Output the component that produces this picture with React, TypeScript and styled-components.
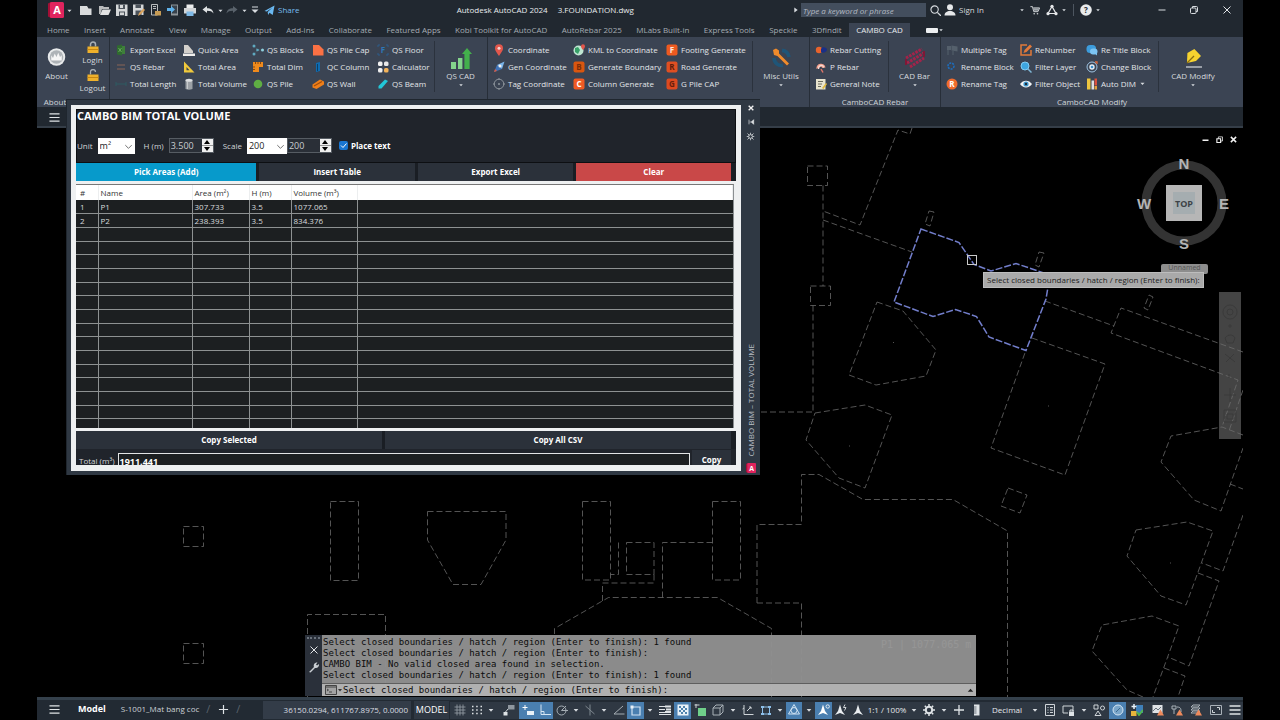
import React from "react";
import styled, { createGlobalStyle } from "styled-components";

const UI = `"Open Sans", "Noto Sans", "Liberation Sans", sans-serif`;
const MONO = `"DejaVu Sans Mono", "Liberation Mono", monospace`;

const GlobalStyle = createGlobalStyle`
  *, *::before, *::after { box-sizing: border-box; }
  body { margin: 0; background: #000; color: #d6dade; font-family: ${UI}; font-size: 8px; line-height: 12px; }
  button, input, select { font: inherit; color: inherit; margin: 0; padding: 0; border: 0; background: none; border-radius: 0; }
  button { cursor: pointer; white-space: nowrap; }
  a { color: inherit; text-decoration: none; }
  svg { display: block; flex: none; }
`;

/* ---------- icons, all on a 12 x 12 grid ---------- */

const letterTile = (bg: string, fg: string, letter: string) => (
  <>
    <rect x="0.5" y="0.5" width="11" height="11" rx="2" fill={bg} />
    <text x="6" y="9" fontSize="8" fontWeight="700" textAnchor="middle" fill={fg}>{letter}</text>
  </>
);

const icons: Record<string, React.ReactNode> = {
  caret: <path d="M2.5 4.5h7L6 8.5z" fill="#d8dce0" />,
  newDoc: <path d="M0 2h7l1.500 2.500H11.500V11H0z" fill="#d9dbdc" />,
  folder: <><path d="M0 2h4l1 1h5v2H3L1.500 10H0z" fill="#b9bbbc" /><path d="M3.500 5.500H12L9.500 11H1z" fill="#e2e3e3" /></>,
  save: <><path d="M0 0.500h11.500V12H0z" fill="#d5d7d8" /><path d="M2.500 0.500h6.500V5H2.500zM3 7.500h6V12H3z" fill="#4b525a" /><path d="M4 1h3v3H4zM4 8.500h4V11H4z" fill="#d5d7d8" /></>,
  saveAs: <><path d="M0 0.500h10.500V11H0z" fill="#d5d7d8" /><path d="M2.500 0.500h5.500V4H2.500zM2.500 6.500h6V11h-6z" fill="#4b525a" /><path d="M5 12l1-3 4.500-4.500L12 6l-4.500 4.500z" fill="#d9a25c" /></>,
  openWeb: <><path d="M1.500 0.500h6V11h-6z" fill="none" stroke="#b9bcbe" /><path d="M5 7h6v4.500H5z" fill="#c79c55" /><path d="M3 2.500h3M3 4.500h3" stroke="#b9bcbe" /></>,
  saveWeb: <><path d="M4 0.500h7V11.500H4z" fill="#8e9498" /><path d="M5 1.500h5v8H5z" fill="#38424c" /><path d="M0 4h4V2l4 3.500L4 9V7H0z" fill="#5fb2ea" /></>,
  print: <><path d="M2.500 0.500h7V4h-7z" fill="#eceded" /><path d="M0 4h12v5.500H0z" fill="#d2d5d7" /><path d="M2.500 7.500h7V12h-7z" fill="#7fb9e6" /></>,
  undo: <path d="M0.500 5.500L5 2v2.300c4 0 6 1.700 6.500 5.200C10 7.500 8.500 6.800 5 6.800V9z" fill="#dfe2e4" />,
  redo: <path d="M11.500 5.500L7 2v2.300c-4 0-6 1.700-6.500 5.200C2 7.500 3.500 6.800 7 6.800V9z" fill="#59626b" />,
  custom: <><path d="M3 3h6" stroke="#d8dce0" /><path d="M2.500 5.500h7L6 9z" fill="#d8dce0" /></>,
  plane: <path d="M0.500 6.500L11.500 0.500L9.500 11L6 8.500L4.500 11L4 7.500L9 3L3 7z" fill="#6bb9f2" />,
  search: <><circle cx="5" cy="5" r="4" fill="none" stroke="#d8dce0" strokeWidth="1.200" /><path d="M8 8l4 4" stroke="#d8dce0" strokeWidth="1.400" /></>,
  user: <><circle cx="6" cy="3.300" r="3" fill="#e6e8ea" /><path d="M0.500 11.500c0-3 2.500-4.500 5.500-4.500s5.500 1.500 5.500 4.500z" fill="#e6e8ea" /></>,
  cart: <><path d="M0.500 2H3l1.500 6h5L11.500 3.500H4" fill="none" stroke="#cfd3d6" strokeWidth="1.200" /><path d="M4 4h7l-1.500 3h-5z" fill="#9fa5aa" /><circle cx="5" cy="10.500" r="1" fill="#cfd3d6" /><circle cx="9" cy="10.500" r="1" fill="#cfd3d6" /></>,
  apps: <><path d="M6 2.500L2 9.500h8z" fill="none" stroke="#e6e8ea" strokeWidth="1.200" /><circle cx="6" cy="2.300" r="1.600" fill="#e6e8ea" /><circle cx="2" cy="9.700" r="1.600" fill="#e6e8ea" /><circle cx="10" cy="9.700" r="1.600" fill="#e6e8ea" /></>,
  help: <><circle cx="6" cy="6" r="5.800" fill="#e9ebec" /><text x="6" y="9" fontSize="8" fontWeight="700" textAnchor="middle" fill="#222a32">?</text></>,
  min: <path d="M2.500 6h7" stroke="#d8dce0" />,
  restore: <><rect x="2.500" y="4" width="5.500" height="5.500" rx="1" fill="none" stroke="#d8dce0" /><path d="M4.500 4V2.500H8.500a1 1 0 0 1 1 1V7.500H8" fill="none" stroke="#d8dce0" /></>,
  close: <path d="M2.500 2.500l7 7M9.500 2.500l-7 7" stroke="#e2e5e8" />,
  docMin: <path d="M2 7h8" stroke="#f2f2f2" strokeWidth="2" />,
  docRestore: <><path d="M2.500 5h5v5h-5z" fill="none" stroke="#f2f2f2" strokeWidth="1.500" /><path d="M4.500 5V2.500H10V8H8" fill="none" stroke="#f2f2f2" /></>,
  docClose: <path d="M2.500 2.500l7 7M9.500 2.500l-7 7" stroke="#f2f2f2" strokeWidth="2" />,
  playCaret: <path d="M4 3l4 3-4 3z" fill="#d8dce0" />,
  excel: <><path d="M2 1.500l5-1v11l-5-1z" fill="#2f6b2f" /><path d="M7 2h3v8H7z" fill="#3e7f3a" /><path d="M3.500 4l3 4M6.500 4l-3 4" stroke="#68a85a" /></>,
  qsRebar: <path d="M2 4h8M2 8h8" stroke="#8a6556" strokeWidth="1.200" />,
  length: <path d="M1 6h10M1 4v4M11 4v4" stroke="#2f5a62" />,
  quickArea: <><path d="M1 1l4 0 5 6v2H1z" fill="#d3d0cc" /><path d="M0 9.500h12V12H0z" fill="#f0eeec" /></>,
  totalArea: <><path d="M1 0.500L11.500 11.500H1z" fill="#f0c93c" /><path d="M3.500 6L6.500 9.300H3.500z" fill="#3b4452" /></>,
  volume: <><path d="M2.500 2h7v9q-3.500 1.500-7 0z" fill="#9ca1a6" /><ellipse cx="6" cy="2.200" rx="3.500" ry="1.500" fill="#dddfe1" /><path d="M4.500 4v7" stroke="#c6cacd" /></>,
  blocks: <><path d="M2 2L6 6L2 10M6 6h4" stroke="#4a6672" fill="none" strokeDasharray="1.500 1" /><circle cx="2" cy="2" r="1.500" fill="#5fa9c0" /><circle cx="2" cy="10" r="1.500" fill="#5fa9c0" /><circle cx="5.500" cy="6" r="1.300" fill="#5fa9c0" /><circle cx="10.500" cy="6" r="1.500" fill="#8fd0dd" /></>,
  totalDim: <><path d="M1 1h10v5H7v5H1z" fill="#ef8a1c" /><path d="M3.500 1v2M6 1v2M8.500 1v2M1 6h2M1 8.500h2" stroke="#8c4a0c" /></>,
  qsPile: <circle cx="6" cy="6" r="4.300" fill="#5fae43" />,
  pileCap: <path d="M1 1h6l4.500 4.500V11.500H1z" fill="#fb7144" />,
  column: <><path d="M4 2l4-1v9l-4 1z" fill="#0f6bb0" /><path d="M5.500 3v7" stroke="#0a3f66" /></>,
  wall: <><path d="M0.500 6.500L8 1.500L12 3.500V6.500L4.500 11L0.500 9.500z" fill="#ee7f1a" /><path d="M2 8l8-4.500" stroke="#a44e08" strokeWidth="1.300" /></>,
  floor: <><path d="M1 3V1h2M9 1h2v2M11 9v2H9M3 11H1V9" fill="none" stroke="#2c5c8c" /><text x="6" y="9" fontSize="8" fontWeight="700" textAnchor="middle" fill="#2e78b8">F</text></>,
  calc: <><rect x="1" y="0.500" width="4.500" height="4.500" rx="1.500" fill="#f1f1f1" /><rect x="7" y="0.500" width="4.500" height="4.500" rx="1.500" fill="#e8e8e8" /><rect x="1" y="7" width="4.500" height="4.500" rx="1.500" fill="#eeeeee" /><rect x="7" y="7" width="4.500" height="4.500" rx="1.500" fill="#f3b35a" /></>,
  beam: <path d="M1.500 8L8 1.500L11 3L4.500 10.500L1.500 10.500z" fill="#22c7d8" />,
  pin: <><path d="M6 12C3.500 8 2 6.500 2 4.200a4 4 0 0 1 8 0C10 6.500 8.500 8 6 12z" fill="#e2574c" /><circle cx="6" cy="4.300" r="1.500" fill="#f6d5d2" /></>,
  gen: <><path d="M1 11L4 4L9 8z" fill="#3f73b8" /><path d="M4 4L11.500 0.500L9 8z" fill="#79b4ea" /><circle cx="7" cy="5" r="1.500" fill="#f2f2f2" /><path d="M1 11l3-1-2-2z" fill="#e05a3f" /></>,
  tag: <><circle cx="6" cy="6" r="4.800" fill="none" stroke="#8d949b" /><circle cx="6" cy="6" r="1" fill="#8d949b" /><path d="M6 0v2M6 10v2M0 6h2M10 6h2" stroke="#8d949b" /></>,
  kml: <><circle cx="5.500" cy="6.500" r="5" fill="#bfe6d2" /><path d="M2 4l3-1 2 3-2 4-3-2z" fill="#38a169" /><path d="M10 6C8.500 4 8 3.300 8 2.200a2 2 0 0 1 4 0C12 3.300 11.500 4 10 6z" fill="#e2574c" /></>,
  tileB: letterTile("#d9560f", "#7c2d06", "B"),
  tileC: letterTile("#ef5a24", "#ffffff", "C"),
  tileF: letterTile("#ee5a20", "#ffe9dc", "F"),
  tileR: letterTile("#df4f22", "#5f1d0a", "R"),
  tileG: letterTile("#dd4a20", "#6a1f0b", "G"),
  cutting: <><circle cx="4" cy="6" r="3.200" fill="#e8632c" /><path d="M6 5c1-3 6-2 6 0.500S8 10 6 8z" fill="#1b2f86" /></>,
  pRebar: <><path d="M1.500 8a4.500 4.500 0 1 1 9-1.500L7.500 7 6 5.500z" fill="#f4a08e" /><path d="M3.500 8c0-4.500 5-4.500 5-1.500" fill="none" stroke="#f6dcd5" strokeWidth="1.200" /><path d="M6 8l2 3.500" stroke="#e0776a" strokeWidth="1.500" /></>,
  note: <><path d="M1 1h9.500v10.500H1z" fill="#e8e4cf" /><path d="M3 3.500h5M3 6h4M3 8.500h3" stroke="#6b6b5e" /><path d="M7 10l4-5 1 1-3.500 5z" fill="#e2b93c" /></>,
  multiTag: <><path d="M1 2h4v4H1zM5.500 1.500l6 1v5l-6-1z" fill="#55606c" /><path d="M2 6v5M7 7v4" stroke="#55606c" /></>,
  renameBlock: <circle cx="5" cy="5" r="3" fill="none" stroke="#1d6fc0" strokeWidth="1.500" strokeDasharray="2 1" />,
  renameTag: <><circle cx="6" cy="6" r="5.500" fill="#f06b2c" /><text x="6" y="9" fontSize="8" fontWeight="700" textAnchor="middle" fill="#fff">R</text></>,
  renumber: <><path d="M7 1H1v10h10V6" fill="none" stroke="#e2793a" strokeWidth="1.500" /><path d="M3.500 9l1-3L10 0.500 12 2.500 6.500 8z" fill="#e2793a" /></>,
  filterLayer: <><circle cx="5" cy="5" r="4" fill="#3ea6e0" stroke="#85cdf2" /><path d="M8 8l3.500 3.500" stroke="#7fb6d6" strokeWidth="1.500" /></>,
  eye: <><path d="M0 6C3 1.500 9 1.500 12 6C9 10.500 3 10.500 0 6z" fill="#f2f4f5" /><circle cx="6" cy="6" r="2.600" fill="#3f9ad0" /><circle cx="6" cy="6" r="1.200" fill="#1c2b38" /></>,
  retitle: <><rect x="0.500" y="1" width="9.500" height="8" rx="3.500" fill="#3d9ddd" /><rect x="4" y="4.500" width="7.500" height="6" rx="3" fill="#7cc4f3" /><path d="M8 9l3 2.500V9z" fill="#7cc4f3" /></>,
  change: <><circle cx="6" cy="6" r="5" fill="none" stroke="#9fc4e4" /><circle cx="6" cy="6" r="2.700" fill="#e4eef6" /><circle cx="6" cy="6" r="1.300" fill="#3c8dcb" /><path d="M9 1h2v2" fill="none" stroke="#e0683a" strokeWidth="1.300" /></>,
  autoDim: <><path d="M1 0.500h3.500v11H1z" fill="#edc53f" /><path d="M5.500 2.500h2.500v9H5.500z" fill="#dfe1e2" /><path d="M8.500 0.500H11v7H8.500z" fill="#d9503e" /><path d="M8.500 8H11v3.500H8.500z" fill="#e5a13c" /></>,
  burger: <path d="M0.500 2h11M0.500 6h11M0.500 10h11" stroke="#dfe3e6" strokeWidth="1.300" />,
  plus: <path d="M6 1v10M1 6h10" stroke="#dfe3e6" strokeWidth="1.300" />,
  grid: <path d="M3 0.500v11M6 0.500v11M9 0.500v11M0.500 3h11M0.500 6h11M0.500 9h11" stroke="#9aa2aa" strokeWidth="0.800" />,
  dots: <path d="M1 2.500h1.500M5.200 2.500h1.500M9.500 2.500H11M1 6h1.500M5.200 6h1.500M9.500 6H11M1 9.500h1.500M5.200 9.500h1.500M9.500 9.500H11" stroke="#dfe3e6" strokeWidth="1.500" />,
  infer: <><path d="M5 1h6.500v4.500H5z" fill="#8f979f" /><path d="M5 5L2.500 8" stroke="#cfd4d8" /><path d="M0.500 8h4v3.500h-4z" fill="#dfe3e6" /></>,
  dyn: <><path d="M3 1v5M0.500 3.500h5" stroke="#fff" /><path d="M5 7h7v4H5z" fill="#e8f1f8" /></>,
  ortho: <><path d="M2 0.500V10.500H12" fill="none" stroke="#d5e6f4" /><path d="M2 7.500h3v3" fill="none" stroke="#d5e6f4" /></>,
  polar: <><circle cx="5.500" cy="6.500" r="4.500" fill="none" stroke="#a5adb4" /><path d="M5.500 6.500h6.500M5.500 6.500L10 2" stroke="#a5adb4" /></>,
  iso: <path d="M6 0.500v11M1.500 2l9 8" stroke="#7f8890" />,
  otrack: <path d="M1 10h10.500M1 10L10 2" stroke="#a5adb4" fill="none" />,
  osnap: <><path d="M2 3h8v8H2z" fill="none" stroke="#cfe2f2" strokeWidth="1.200" /><path d="M0.500 1.500h3v3h-3z" fill="#e8f1f8" /></>,
  lwt: <><path d="M0 2.500h6M0 5.500h6M0 8.500h6M0 10.500h12" stroke="#dfe3e6" /><path d="M6 2.500h6M7 5.500h5M6 8h6" stroke="#dfe3e6" strokeWidth="1.800" /></>,
  transp: <><path d="M0.500 0.500h11v11h-11z" fill="#e9f2f9" /><path d="M2 2h2v2H2zM6 2h2v2H6zM4 4h2v2H4zM8 4h2v2H8zM2 6h2v2H2zM6 6h2v2H6zM4 8h2v2H4zM8 8h2v2H8z" fill="#4f83ad" /></>,
  cycle: <><path d="M4 4h8v8H4z" fill="#6fcf8a" /><path d="M0.500 1h5M2 0v4" stroke="#cfd4d8" /></>,
  cube: <path d="M1 4h7v7H1zM4 1h7v7M1 4l3-3M8 4l3-3M8 11l3-3" fill="none" stroke="#a9b1b8" />,
  ucs: <path d="M2 1v9.500H11.500M2 4L0.500 5M5 7l4-4M7 3h2v2" fill="none" stroke="#cfd4d8" />,
  sel: <><path d="M2.500 3h7v7h-7z" fill="none" stroke="#8ec0ea" /><path d="M1 2h3v2H1zM8 2h3v2H8zM1 9h3v2H1zM8 9h3v2H8z" fill="#8ec0ea" /></>,
  gizmo: <><path d="M6 0.500L11.500 10H0.500z" fill="none" stroke="#cfe2f2" /><circle cx="6" cy="6.500" r="3" fill="none" stroke="#cfe2f2" /></>,
  anno: <path d="M6 0.500L8 7l3 4-5-2-5 2 3-4z" fill="#e9edf0" />,
  annoAuto: <><path d="M5 0.500L7 7l3 4-5-2-5 2 3-4z" fill="#e9edf0" /><path d="M10 0.500l-1.500 3h2.500l-1.500 3" stroke="#cfd4d8" fill="none" /></>,
  annoVis: <><path d="M5 0.500L7 7l3 4-5-2-5 2 3-4z" fill="#fff" /><circle cx="9.700" cy="2.500" r="1.700" fill="none" stroke="#fff" strokeWidth="0.800" /></>,
  gear: <><circle cx="6" cy="6" r="3.200" fill="none" stroke="#dfe3e6" strokeWidth="2" /><path d="M6 0v2M6 10v2M0 6h2M10 6h2M1.800 1.800l1.400 1.400M8.800 8.800l1.400 1.400M10.200 1.800L8.800 3.200M3.200 8.800l-1.400 1.400" stroke="#dfe3e6" strokeWidth="1.500" /></>,
  ruler: <><path d="M3 0.500h5.500v11H3z" fill="#dfe3e6" /><path d="M3 3h2.500M3 5h2.500M3 7h2.500M3 9h2.500" stroke="#4b5560" strokeWidth="0.800" /></>,
  props: <><path d="M1.500 0.500h9v11h-9z" fill="none" stroke="#cfd4d8" /><path d="M3.500 3.500h1M6 3.500h3M3.500 6h1M6 6h3M3.500 8.500h1M6 8.500h3" stroke="#cfd4d8" /></>,
  lockUi: <><path d="M1 2h10v5M1 2v7h5" fill="none" stroke="#cfd4d8" /><path d="M7 7.500h5V12H7z" fill="#dfe3e6" /><path d="M8 7.500V6h3v1.500" fill="none" stroke="#dfe3e6" /></>,
  shapes: <><path d="M1 1h4v4H1z" fill="none" stroke="#cfd4d8" /><circle cx="9.500" cy="4" r="2" fill="none" stroke="#cfd4d8" /><path d="M5 7l3 4.500H2z" fill="none" stroke="#cfd4d8" /></>,
  isolate: <><circle cx="6" cy="6" r="5" fill="#7aa6ca" stroke="#d5e6f4" /><path d="M4 8l4-4" stroke="#3c6a90" /></>,
  cloud: <><path d="M5 1h7v8H5z" fill="#3f7fb8" /><path d="M3 0v5M0.500 2.500h5" stroke="#e9f2f9" strokeWidth="1.500" /><path d="M0 7h5.500v5H0z" fill="#e8b53c" /><path d="M6 8l2 3 4-5" fill="none" stroke="#51b84f" strokeWidth="1.800" /></>,
  warnImg: <><path d="M0.500 1h10v8h-10z" fill="#dfe3e6" /><path d="M1 7l3-3 2 2 3-3" stroke="#69737d" fill="none" /><path d="M8.500 5.500l3.500 6H5z" fill="#ee8a5c" /></>,
  warnRef: <><path d="M1 2h4v3H1zM3 5v5M6 3c4 0 4 2 4 5" fill="none" stroke="#a9b1b8" /><path d="M8.500 5.500l3.500 6H5z" fill="#ee8a5c" /></>,
  warnLayer: <><path d="M3 1h7l-2 2H1zM3 4h7l-2 2H1zM3 7h7l-2 2H1z" fill="none" stroke="#a9b1b8" /><path d="M8.500 5.500l3.500 6H5z" fill="#ee8a5c" /></>,
  screen: <><path d="M0.500 1.500h11v9H0.500z" fill="none" stroke="#a9b1b8" /><path d="M7 3.500h2.500V6M5 8.500H2.500V6" fill="none" stroke="#cfd4d8" /></>,
  wrench: <path d="M1 11L6 6C5 3.500 7 1 9.500 1.500L8 3.500 9 4.500 11 3C11.500 5.500 9 7.500 7 7L2.500 11.500z" fill="#c9ced3" />,
  autohide: <path d="M3 2.500v7M10 2.500v7L6.500 6zM4 6h3" stroke="#e2e5e8" fill="#e2e5e8" />,
  sun: <><circle cx="6" cy="6" r="2.500" fill="none" stroke="#e2e5e8" strokeWidth="1.200" /><path d="M2 2l2 2M10 2L8 4M2 10l2-2M10 10L8 8M6 1v2M6 9v2M1 6h2M9 6h2" stroke="#e2e5e8" /></>,
  prompt: <><path d="M0.500 1.500h11v9H0.500z" fill="#a3a3a3" stroke="#444" /><path d="M0.500 3h11" stroke="#444" /><path d="M2 5l1.500 1L2 7M4 8h3" stroke="#444" fill="none" /></>,
  darkCaret: <path d="M2 4h8L6 9z" fill="#333" />,
  chevron: <path d="M2.500 4.500L6 8l3.500-3.500" fill="none" stroke="#666" />,
  /* large ribbon artwork */
  aboutBig: <><circle cx="6" cy="6" r="5" fill="#e8eaeb" /><circle cx="6" cy="6" r="3.900" fill="#aeb3b7" /><path d="M3 8V5l1 1.500L5 4l1 2 1-2.500L8 6l1-1v3z" fill="#f6f6f6" /></>,
  lock: <><path d="M3.500 5.500V3.500a2.500 2.500 0 0 1 5 0V5.500" fill="none" stroke="#a9afb5" strokeWidth="1.500" /><path d="M0.500 5.500h11V12h-11z" fill="#efb12b" /><path d="M0.500 8.500h11" stroke="#c88711" /></>,
  unlock: <><path d="M3.500 5.500V3a2.500 2.500 0 0 1 5 0" fill="none" stroke="#a9afb5" strokeWidth="1.300" /><path d="M0.500 5.500h11V12h-11z" fill="#efb12b" /><path d="M0.500 8.500h11" stroke="#c88711" /></>,
  qsCad: <><path d="M1 8.500h2.500V12H1zM4.500 6.500h2.200V12H4.500z" fill="#84d58c" /><path d="M7.700 12V4.500H6.500L9 1.500 11.500 4.500H10.300V12z" fill="#43b04c" /></>,
  misc: <><path d="M2.500 6.500a3.800 3.800 0 0 0 4.500 3.700M10 6a4 4 0 0 0-3.500-3.300" fill="none" stroke="#1f5578" strokeWidth="1.800" /><path d="M2 2.500L3.500 1.800l1.500 1 0 1.400 5 5-1 1L4.200 5.500 2.500 5z" fill="#f08b2c" /></>,
  cadBar: <><path d="M1.500 6.500L9.500 2M2 9L10.500 4M3.500 11L10.500 6.500" stroke="#a3234a" strokeWidth="1.500" strokeDasharray="1.300 0.500" /><path d="M1.500 7v3M10.500 3v3" stroke="#7e1836" /></>,
  cadModify: <><path d="M3 9L3.200 4l3.500-2 3.300 3.500-2.500 2.500z" fill="#f6d32f" /><path d="M3 9L6.500 5.500" stroke="#8a6d10" strokeWidth="0.600" /><path d="M2.500 11h8" stroke="#d9dcdf" strokeWidth="0.600" /></>,
};

const Glyph = ({ name, size = 12 }: { name: string; size?: number }) => (
  <svg width={size} height={size} viewBox="0 0 12 12" aria-hidden="true">{icons[name]}</svg>
);

const AcadLogo = ({ size = 16 }: { size?: number }) => (
  <svg width={size} height={size} viewBox="0 0 16 16" aria-hidden="true">
    <path d="M0 1.500L3 0v16L0 14.500z" fill="#a30f36" />
    <rect x="2" width="14" height="16" rx="1.500" fill="#e0245e" />
    <text x="9" y="12" fontSize="11" fontWeight="700" textAnchor="middle" fill="#fff">A</text>
  </svg>
);

/* ---------- application frame ---------- */

const Frame = styled.div`
  display: flex; flex-direction: column; min-height: 100vh;
  margin: 0 37px; position: relative; overflow: hidden; background: #212830;
`;
const TitleBar = styled.header`
  display: flex; align-items: center; justify-content: space-between; height: 20px; padding: 0 10px 0 11px;
`;
const Group = styled.div`
  display: flex; align-items: center;
`;
const WindowButtons = styled.div`
  display: flex; align-items: center; gap: 20px; padding-left: 52px;
`;
const Slot = styled.button<{ $w: number }>`
  display: flex; align-items: center; justify-content: center; width: ${(p) => p.$w}px; height: 14px; flex: none;
`;
const ShareButton = styled.button`
  display: flex; align-items: center; gap: 3px; color: #78bdf0; padding-left: 2px;
`;
const Caption = styled.div`
  display: flex; gap: 10px; color: #e8ebee; white-space: pre;
`;
const KeywordBox = styled.input`
  width: 125px; height: 14px; padding: 0 2px; background: #434e5d; font-style: italic;
  &::placeholder { color: #b3bac2; opacity: 1; }
`;
const SignIn = styled.button`
  display: flex; align-items: center; gap: 3px; width: 74px;
`;
const Rule = styled.span`
  width: 1px; height: 12px; background: #4d5660; margin: 0 5px;
`;
const TabStrip = styled.nav`
  display: flex; align-items: flex-end; height: 17px; padding-left: 3px; white-space: nowrap;
`;
const TabList = styled.div`
  display: flex; justify-content: space-between; width: 870px;
`;
const RibbonTab = styled.a<{ $active?: boolean }>`
  padding: 0 7px; height: 14px; line-height: 14px;
  color: ${(p) => (p.$active ? "#e8ebee" : "#a5acb3")};
  background: ${(p) => (p.$active ? "#3b4453" : "transparent")};
`;
const RibbonState = styled.button`
  display: flex; align-items: center; height: 14px; margin-left: 16px;
  &::before { content: ""; width: 12px; height: 5px; background: #eef0f2; border-radius: 1px; }
`;

const Ribbon = styled.section`
  display: flex; height: 70px; background: #3b4453;
`;
const Panel = styled.div<{ $w?: number }>`
  display: flex; flex-direction: column; border-right: 1px solid #272e38;
  ${(p) => (p.$w ? `width: ${p.$w}px; flex: none;` : "flex: 1; border-right: 0;")}
`;
const PanelBody = styled.div`
  display: flex; height: 57px; padding-top: 4px;
`;
const PanelTitle = styled.div`
  display: flex; justify-content: space-around; text-align: center; line-height: 15px; color: #d0d4d9;
`;
const ToolGrid = styled.div<{ $cols: string }>`
  display: grid; grid-template-columns: ${(p) => p.$cols}; grid-template-rows: repeat(3, 17px);
  grid-auto-flow: column; padding-left: 5px; border-right: 1px solid #2b323d; margin-bottom: 2px;
`;
const Tool = styled.button`
  display: flex; align-items: center; gap: 3px; color: #e2e5e8; text-align: left;
`;
const BigTool = styled.button<{ $w: number }>`
  display: flex; flex-direction: column; align-items: center; width: ${(p) => p.$w}px; padding-top: 3px;
  svg:first-child { height: 26px; }
`;
const SmallStack = styled.div`
  display: flex; flex-direction: column; gap: 3px; width: 33px;
`;
const StackTool = styled.button`
  display: flex; flex-direction: column; align-items: center; line-height: 13px;
`;
const DocBar = styled.div`
  display: flex; align-items: center; height: 21px; padding: 2px 0 0 11px; border-bottom: 2px solid #353e48;
`;

/* ---------- drawing area ---------- */

const Canvas = styled.main`
  position: relative; flex: 1; min-height: 568px; background: #000; overflow: hidden;
`;
const Drawing = styled.svg`
  position: absolute; inset: 0; width: 100%; height: 100%;
`;
const DocControls = styled.div`
  position: absolute; top: 4px; right: 4px; display: flex; gap: 2px;
`;
const ViewCube = styled.svg`
  position: absolute; top: 26px; right: 8px;
`;
const UcsMenu = styled.button`
  position: absolute; top: 136px; right: 35px; width: 47px; height: 10px; border-radius: 2px; background: #8d8d8d; color: #555;
  font-size: 7px; line-height: 8px; padding-bottom: 2px;
`;
const NavBar = styled.div`
  position: absolute; top: 164px; right: 2px; width: 22px; height: 147px; padding: 10px 0;
  display: flex; flex-direction: column; align-items: center; justify-content: space-between; background: rgba(110, 110, 110, 0.62);
`;
const Prompt = styled.div`
  position: absolute; top: 144px; left: 946px; height: 16px; padding: 0 3px; line-height: 14px; white-space: nowrap;
  background: #a9a9a9; border: 1px solid #bdbdbd; color: #1d1d1d;
`;

/* ---------- command line ---------- */

const CommandWindow = styled.section`
  position: absolute; left: 268px; bottom: 1px; display: flex; width: 671px; height: 61px; font-family: ${MONO}; font-size: 9px; color: #0c0c0c;
`;
const CommandGrip = styled.div`
  display: flex; flex-direction: column; align-items: center; gap: 5px; width: 17px; padding-top: 2px; background: #2a303a;
  &::before { content: ""; width: 13px; border-top: 2px dotted #6a727c; }
`;
const CommandBody = styled.div`
  flex: 1; display: flex; flex-direction: column;
`;
const History = styled.div`
  flex: 1; padding: 2px 1px; line-height: 11px; white-space: pre; background: rgba(145, 145, 145, 0.96);
`;
const CommandRow = styled.label`
  display: flex; align-items: center; height: 14px; padding: 0 0 0 3px; background: rgba(182, 182, 182, 0.97); border-top: 1px solid #5e5e5e;
  input { flex: 1; }
`;

/* ---------- total volume palette ---------- */

const Palette = styled.section`
  position: absolute; left: 29px; top: 99px; display: flex; width: 694px; height: 376px; padding: 0 0 0 4px;
  background: #2f3843; border: 1px solid #1f262e; border-width: 1px 0 0 1px;
`;
const PaletteBody = styled.div`
  flex: 1; min-width: 0; display: flex; flex-direction: column; margin: 5px 0 4px; padding: 4px 5px 6px; background: #eef0f1; overflow: hidden;
`;
const PaletteRail = styled.aside`
  display: flex; flex-direction: column; align-items: center; width: 19px; padding: 1px 0 2px;
`;
const RailTitle = styled.span`
  writing-mode: vertical-rl; transform: rotate(180deg); margin: auto 0 6px; color: #b7bdc3; white-space: nowrap;
`;
const SettingsBox = styled.div`
  height: 54px; flex: none; background: #20242b; border: 1px solid #0d0f12; color: #d2d5d8;
`;
const Heading = styled.h1`
  margin: 0; font-size: 11px; line-height: 12px; font-weight: 700; color: #fff;
`;
const Settings = styled.div`
  display: flex; align-items: center; margin-top: 15px; height: 17px;
`;
const Field = styled.label<{ $gap: number }>`
  display: flex; align-items: center; gap: 5px; margin-right: ${(p) => p.$gap}px;
`;
const SelectBox = styled.span<{ $w: number }>`
  position: relative; display: flex; width: ${(p) => p.$w}px; height: 16px; background: #fff; color: #222; font-size: 9px;
  select { width: 100%; padding: 0 2px; appearance: none; }
  svg { position: absolute; right: 1px; top: 3px; pointer-events: none; }
`;
const Spinner = styled.span`
  display: flex; width: 45px; height: 15px; border: 1px solid #565c63; background: #2a2f37; color: #c9cdd1; font-size: 9px;
  input { width: 32px; flex: none; padding: 0 1px; }
  div { flex: 1; display: flex; flex-direction: column; background: #f0f0f0; }
  button { flex: 1; display: flex; align-items: center; justify-content: center; height: 6px; overflow: hidden; }
  button + button { border-top: 1px solid #999; }
`;
const CheckField = styled.label`
  display: flex; align-items: center; gap: 3px; margin-left: 7px; font-weight: 700; color: #fff;
  input { appearance: none; width: 9px; height: 9px; border-radius: 2px; background: #1976d2 url("data:image/svg+xml,%3Csvg xmlns='http://www.w3.org/2000/svg' viewBox='0 0 9 9'%3E%3Cpath d='M2 4.500l2 2 3.500-4' fill='none' stroke='white'/%3E%3C/svg%3E"); }
`;
const ButtonRow = styled.div<{ $cols: string }>`
  display: grid; grid-template-columns: ${(p) => p.$cols}; gap: 3px; flex: none; height: 18px; padding-right: 5px; background: #1a1e24;
`;
const PaletteButton = styled.button<{ $tone?: string }>`
  font-weight: 700; color: #fff; background: ${(p) => p.$tone ?? "#2b313a"};
`;
const TableBox = styled.div`
  height: 244px; flex: none; margin: 3px 2px 3px 0; overflow: hidden; background: #1c1f21; border-right: 1px solid #8b8f92; border-top: 1px solid #777;
`;
const Table = styled.table`
  width: 100%; height: 248px; table-layout: fixed; border-collapse: collapse; color: #d8dbdd;
  th { padding: 0 2px; height: 15px; background: #fff; color: #333; font-weight: 400; text-align: left; line-height: 12px; border-right: 1px solid #eceeef; }
  td { padding: 0 2px; height: 13px; line-height: 10px; border-bottom: 1px solid #8d9192; border-right: 1px solid #8d9192; }
  td:last-child { border-right: 0; }
  th:first-child, td:first-child { padding-left: 4px; }
`;
const TotalRow = styled.div`
  display: flex; flex: 1; min-height: 0; padding: 1px 5px 0 3px; background: #20242b; overflow: hidden;
`;
const TotalField = styled.label`
  display: flex; flex: 1; gap: 3px; height: 18px; line-height: 22px; color: #d2d5d8;
  input { flex: 1; height: 18px; margin-top: 3px; padding-left: 1px; background: #1c1f21; border: 1px solid #e2e4e5; font-size: 9px; font-weight: 700; color: #fff; }
`;
const CopyButton = styled(PaletteButton)`
  width: 39px; height: 20px; margin-left: 2px;
`;

/* ---------- status bar ---------- */

const StatusBar = styled.footer`
  display: flex; align-items: center; height: 23px; border-top: 3px solid #34404b; background: #222a33; white-space: nowrap;
`;
const LayoutTabs = styled.div`
  display: flex; align-items: center; flex: 1; padding: 0 0 2px 11px;
`;
const LayoutTab = styled.a<{ $active?: boolean }>`
  margin-left: ${(p) => (p.$active ? 18 : 15)}px; font-size: ${(p) => (p.$active ? 9 : 8)}px;
  font-weight: ${(p) => (p.$active ? 700 : 400)}; color: ${(p) => (p.$active ? "#fff" : "#ccd1d6")};
`;
const Slash = styled.span`
  margin: 0 7px; font-size: 11px; color: #59636d;
`;
const Coordinates = styled.button`
  width: 148px; height: 18px; padding-right: 3px; text-align: right; background: #333c48; color: #d9dde1;
`;
const ModelButton = styled.button`
  width: 35px; height: 18px; margin: 0 1px 0 3px; background: #2f3843; font-size: 9px; color: #fff;
`;
const StatusItem = styled.button<{ $w: number; $on?: boolean }>`
  display: flex; align-items: center; justify-content: center; flex: none; width: ${(p) => p.$w}px; height: 17px;
  background: ${(p) => (p.$on ? "#4a7fb0" : "#2f3843")}; color: #e6e9ec;
`;

/* ---------- data ---------- */

const tabs = ["Home", "Insert", "Annotate", "View", "Manage", "Output", "Add-ins", "Collaborate", "Featured Apps",
  "Kobi Toolkit for AutoCAD", "AutoRebar 2025", "MLabs Built-in", "Express Tools", "Speckle", "3Dfindit", "CAMBO CAD"];

const qsTools = [["excel", "Export Excel"], ["qsRebar", "QS Rebar"], ["length", "Total Length"],
  ["quickArea", "Quick Area"], ["totalArea", "Total Area"], ["volume", "Total Volume"],
  ["blocks", "QS Blocks"], ["totalDim", "Total Dim"], ["qsPile", "QS Pile"],
  ["pileCap", "QS Pile Cap"], ["column", "QC Column"], ["wall", "QS Wall"],
  ["floor", "QS Floor"], ["calc", "Calculator"], ["beam", "QS Beam"]];
const modelTools = [["pin", "Coordinate"], ["gen", "Gen Coordinate"], ["tag", "Tag Coordinate"],
  ["kml", "KML to Coordinate"], ["tileB", "Generate Boundary"], ["tileC", "Column Generate"],
  ["tileF", "Footing Generate"], ["tileR", "Road Generate"], ["tileG", "G Pile CAP"]];
const rebarTools = [["cutting", "Rebar Cutting"], ["pRebar", "P Rebar"], ["note", "General Note"]];
const modifyTools = [["multiTag", "Multiple Tag"], ["renameBlock", "Rename Block"], ["renameTag", "Rename Tag"],
  ["renumber", "ReNumber"], ["filterLayer", "Filter Layer"], ["eye", "Filter Object"],
  ["retitle", "Re Title Block"], ["change", "Change Block"], ["autoDim", "Auto DIM"]];

const quickAccess: [string, number][] = [["caret", 11], ["newDoc", 21], ["folder", 17], ["save", 17], ["saveAs", 17], ["openWeb", 17],
  ["saveWeb", 17], ["print", 18], ["undo", 17], ["caret", 8], ["redo", 16], ["caret", 8], ["custom", 14]];

const statusItems: { icon?: string; text?: string; w: number; on?: boolean }[] = [
  { icon: "grid", w: 20 }, { icon: "dots", w: 14 }, { icon: "caret", w: 14 }, { icon: "infer", w: 21 },
  { icon: "dyn", w: 17, on: true }, { icon: "ortho", w: 17, on: true }, { icon: "polar", w: 17 }, { icon: "caret", w: 12 },
  { icon: "iso", w: 16 }, { icon: "caret", w: 12 }, { icon: "otrack", w: 17 }, { icon: "osnap", w: 17, on: true },
  { icon: "caret", w: 12 }, { icon: "lwt", w: 18 }, { icon: "transp", w: 17, on: true }, { icon: "cycle", w: 18 },
  { icon: "cube", w: 17 }, { icon: "caret", w: 13 }, { icon: "ucs", w: 18 }, { icon: "sel", w: 17 }, { icon: "caret", w: 12 },
  { icon: "gizmo", w: 16, on: true }, { icon: "caret", w: 13 }, { icon: "annoVis", w: 17, on: true }, { icon: "annoAuto", w: 17 },
  { icon: "anno", w: 17 }, { text: "1:1 / 100%", w: 42 }, { icon: "caret", w: 11 }, { icon: "gear", w: 19 }, { icon: "caret", w: 12 },
  { icon: "plus", w: 18 }, { icon: "ruler", w: 18 }, { text: "Decimal", w: 42 }, { icon: "caret", w: 14 }, { icon: "props", w: 16 },
  { icon: "lockUi", w: 20 }, { icon: "caret", w: 11 }, { icon: "shapes", w: 20 }, { icon: "isolate", w: 17, on: true },
  { icon: "cloud", w: 22 }, { icon: "warnImg", w: 19 }, { icon: "warnRef", w: 19 }, { icon: "warnLayer", w: 20 },
  { icon: "screen", w: 20 }, { icon: "burger", w: 17 },
];

const volumes = [["1", "P1", "307.733", "3.5", "1077.065"], ["2", "P2", "238.393", "3.5", "834.376"]];

const Tools = ({ items, cols }: { items: string[][]; cols: string }) => (
  <ToolGrid $cols={cols}>
    {items.map(([icon, label]) => (
      <Tool key={label}>
        <Glyph name={icon} />{label}{label === "Auto DIM" && <Glyph name="caret" size={7} />}
      </Tool>
    ))}
  </ToolGrid>
);

const Big = ({ icon, label, w }: { icon: string; label: string; w: number }) => (
  <BigTool $w={w}><Glyph name={icon} size={24} /><span>{label}</span><Glyph name="caret" size={6} /></BigTool>
);

const outlines = `
M807.500 166h20v19.500h-20z M823 185.500V286 M810.500 286h20v19.500h-20z M813 305.500V412 M761 412h53
M912 128l-2 6-12-4L860 225L823 211 M823 220L912 252
M929 211l5 1-4 14-5-2z M1039 252l5 1-5 14-4-2z M1149 295l4 2-5 13-4-2z
M877 302L903 311L936 350L926 376L876 385L849 375z
M1045 301L1114 326 M1243 352L1121 308L1111 333L1238 380L1222 427 M1243 390L1229 431
M1032 338L1105 364L1065 475L991 448L1026 350
M815 413L865 405L892 415L865 488L839 478L806 440z
M757 603V524.500H801.500V474.500H819L863 499.500H953L1007.500 531V697 M757 603H801.500V697
M1008 488L1027 495L1020 513L1001 506z
M1243 435L1222 427L1171 436L1161 462L1194 500L1221 511L1243 448 M1230 484L1243 489
M1136 530L1187 522L1213 531L1186 605L1161 596L1127 556z
M1243 515L1223 571L1202 563 M1198 573L1219 581L1189 666L1168 657 M1164 668L1185 676L1178 697
M1143 697L1127 690L1092 651L1102 625L1152 616L1179 626L1153 697
M183.500 526.500h20v20h-20z M183.500 643.500h20v20h-20z M330.500 501.500h28v79h-28z
M307.500 697V614.500H385.500V697 M427.500 511.500H506V540L481 584.500H453L427.500 540z
M582.500 501.500H610.500V580H582.500z M712.500 501.500H740.500V580H712.500z
M618.500 542.500V574.500H610.500 M626.500 542.500H654V574.500H626.500z M654 574.500V583H602.500V601
M712.500 542.500H662.500V597.500 M554.500 634V628.500L608.500 597.500H717.500L771.500 628.500V697
M893 342.500h1 M1048 406h1 M849 446h1 M1170 563h1`;
const selection = "M921 229L959 242.500L974 264.500L991 271L1016 263.500L1050 275L1046 299L1026 350.500L989 337L976.500 316.500L955.500 309.500L933 316.500L894 302z";

export default function App() {
  return (
    <Frame>
      <GlobalStyle />
      <TitleBar>
        <Group>
          <AcadLogo />
          {quickAccess.map(([name, w], i) => (
            <Slot key={i} $w={w} aria-label={name}><Glyph name={name} size={name === "caret" ? 7 : 12} /></Slot>
          ))}
          <ShareButton><Glyph name="plane" size={11} />Share</ShareButton>
        </Group>
        <Caption><span>Autodesk AutoCAD 2024</span><span>3.FOUNDATION.dwg</span></Caption>
        <Group>
          <Slot $w={10} aria-label="Expand search"><Glyph name="playCaret" size={10} /></Slot>
          <KeywordBox aria-label="Search" placeholder="Type a keyword or phrase" />
          <Slot $w={18} aria-label="Search help"><Glyph name="search" size={11} /></Slot>
          <SignIn><Glyph name="user" />Sign In</SignIn>
          <Slot $w={8} aria-label="Account menu"><Glyph name="caret" size={6} /></Slot>
          <Slot $w={18} aria-label="App store"><Glyph name="cart" size={10} /></Slot>
          <Slot $w={16} aria-label="Autodesk apps"><Glyph name="apps" /></Slot>
          <Slot $w={8} aria-label="Apps menu"><Glyph name="caret" size={6} /></Slot>
          <Rule />
          <Slot $w={14} aria-label="Help"><Glyph name="help" /></Slot>
          <Slot $w={10} aria-label="Help menu"><Glyph name="caret" size={6} /></Slot>
          <WindowButtons>
            <Slot $w={13} aria-label="Minimize"><Glyph name="min" /></Slot>
            <Slot $w={12} aria-label="Restore"><Glyph name="restore" /></Slot>
            <Slot $w={13} aria-label="Close"><Glyph name="close" /></Slot>
          </WindowButtons>
        </Group>
      </TitleBar>

      <TabStrip>
        <TabList>
          {tabs.map((t) => <RibbonTab key={t} href="#" $active={t === "CAMBO CAD"}>{t}</RibbonTab>)}
        </TabList>
        <RibbonState aria-label="Minimize ribbon"><Glyph name="caret" size={6} /></RibbonState>
      </TabStrip>

      <Ribbon>
        <Panel $w={73}>
          <PanelBody>
            <BigTool $w={39}><Glyph name="aboutBig" size={21} /><span>About</span></BigTool>
            <SmallStack>
              <StackTool><Glyph name="lock" />Login</StackTool>
              <StackTool><Glyph name="unlock" />Logout</StackTool>
            </SmallStack>
          </PanelBody>
          <PanelTitle><span>About</span><span>About</span></PanelTitle>
        </Panel>
        <Panel $w={378}>
          <PanelBody><Tools items={qsTools} cols="68px 69px 60px 65px 57px" /><Big icon="qsCad" label="QS CAD" w={51} /></PanelBody>
          <PanelTitle>CamboCAD QS</PanelTitle>
        </Panel>
        <Panel $w={322}>
          <PanelBody><Tools items={modelTools} cols="80px 93px 86px" /><Big icon="misc" label="Misc Utils" w={56} /></PanelBody>
          <PanelTitle>CamboCAD Modeling</PanelTitle>
        </Panel>
        <Panel $w={131}>
          <PanelBody><Tools items={rebarTools} cols="73px" /><Big icon="cadBar" label="CAD Bar" w={52} /></PanelBody>
          <PanelTitle>CamboCAD Rebar</PanelTitle>
        </Panel>
        <Panel>
          <PanelBody><Tools items={modifyTools} cols="74px 66px 72px" /><Big icon="cadModify" label="CAD Modify" w={68} /></PanelBody>
          <PanelTitle>CamboCAD Modify</PanelTitle>
        </Panel>
      </Ribbon>

      <DocBar><Slot $w={12} aria-label="Document menu"><Glyph name="burger" size={11} /></Slot></DocBar>

      <Canvas>
        <Drawing>
          <g transform="translate(-37 -128)" fill="none">
            <path d={outlines} stroke="#6a6a6a" strokeWidth="0.800" strokeDasharray="6 3" />
            <path d={selection} stroke="#727ecb" strokeWidth="1.500" strokeDasharray="7 2" />
            <rect x="967.500" y="255.500" width="9" height="9" stroke="#c9c9c9" />
            <text x="881" y="648" fontSize="10" fontFamily={MONO} fill="#fff">P1 | 1077.065 m</text>
          </g>
        </Drawing>
        <DocControls>
          <Slot $w={12} aria-label="Minimize drawing"><Glyph name="docMin" size={9} /></Slot>
          <Slot $w={12} aria-label="Restore drawing"><Glyph name="docRestore" size={9} /></Slot>
          <Slot $w={12} aria-label="Close drawing"><Glyph name="docClose" size={9} /></Slot>
        </DocControls>
        <ViewCube width="102" height="100" viewBox="0 0 102 100" fontFamily="Liberation Sans, sans-serif" fontWeight="700" fontSize="15" textAnchor="middle" fill="#b4b4b4">
          <circle cx="51" cy="49" r="38" fill="none" stroke="#333" strokeWidth="9" />
          <rect x="33" y="31" width="36" height="36" fill="#b6b6b6" />
          <rect x="40" y="38" width="22" height="22" fill="#a5adb0" />
          <text x="51" y="53" fontSize="9" fontFamily="Open Sans, sans-serif" fill="#3d4347">TOP</text>
          <text x="51" y="15">N</text><text x="51" y="95">S</text>
          <text x="11" y="55">W</text><text x="91" y="55">E</text>
        </ViewCube>
        <UcsMenu>Unnamed</UcsMenu>
        <NavBar>
          <svg width="18" height="127" viewBox="0 0 18 127" fill="none" stroke="#3a3a3a" aria-hidden="true">
            <circle cx="9" cy="10" r="7" /><circle cx="9" cy="10" r="3" />
            <path d="M9 22v4M7 24h4M4 36c3-4 8-4 10 0l-2 5H6zM4 52l10 8M5 60l8-8M8 72v4M9 86v14M3 93h12M3 108h12v12H3zM6 112h6v5H6z" />
          </svg>
        </NavBar>
        <Prompt>Select closed boundaries / hatch / region (Enter to finish):</Prompt>
        <CommandWindow>
          <CommandGrip><Glyph name="close" size={12} /><Glyph name="wrench" size={12} /></CommandGrip>
          <CommandBody>
            <History>{`Select closed boundaries / hatch / region (Enter to finish): 1 found
Select closed boundaries / hatch / region (Enter to finish):
CAMBO BIM - No valid closed area found in selection.
Select closed boundaries / hatch / region (Enter to finish): 1 found`}</History>
            <CommandRow>
              <Glyph name="prompt" /><Glyph name="darkCaret" size={6} />
              <input aria-label="Command" defaultValue="Select closed boundaries / hatch / region (Enter to finish):" />
              <svg width="11" height="12" viewBox="0 0 12 12" aria-hidden="true"><path d="M3 8h6L6 4.500z" fill="#222" /></svg>
            </CommandRow>
          </CommandBody>
        </CommandWindow>
      </Canvas>

      <StatusBar>
        <LayoutTabs>
          <Slot $w={12} aria-label="Layout menu"><Glyph name="burger" size={11} /></Slot>
          <LayoutTab href="#" $active>Model</LayoutTab>
          <LayoutTab href="#">S-1001_Mat bang coc</LayoutTab>
          <Slash>/</Slash>
          <Slot $w={12} aria-label="New layout"><Glyph name="plus" size={11} /></Slot>
          <Slash>/</Slash>
        </LayoutTabs>
        <Coordinates>36150.0294, 611767.8975, 0.0000</Coordinates>
        <ModelButton>MODEL</ModelButton>
        {statusItems.map((s, i) => (
          <StatusItem key={i} $w={s.w} $on={s.on} aria-label={s.text ?? s.icon}>
            {s.text ?? <Glyph name={s.icon!} size={s.icon === "caret" ? 8 : 12} />}
          </StatusItem>
        ))}
      </StatusBar>

      <Palette>
        <PaletteBody>
          <SettingsBox>
            <Heading>CAMBO BIM TOTAL VOLUME</Heading>
            <Settings>
              <Field $gap={9}>Unit
                <SelectBox $w={37}><select defaultValue="m²"><option>m²</option></select><Glyph name="chevron" size={11} /></SelectBox>
              </Field>
              <Field $gap={9}>H (m)
                <Spinner><input defaultValue="3.500" /><div><button aria-label="Increase height"><svg width="6" height="4"><path d="M0 4h6L3 0z" /></svg></button><button aria-label="Decrease height"><svg width="6" height="4"><path d="M0 0h6L3 4z" /></svg></button></div></Spinner>
              </Field>
              <Field $gap={0}>Scale
                <SelectBox $w={40}><select defaultValue="200"><option>200</option></select><Glyph name="chevron" size={11} /></SelectBox>
              </Field>
              <Spinner><input aria-label="Custom scale" defaultValue="200" /><div><button aria-label="Increase scale"><svg width="6" height="4"><path d="M0 4h6L3 0z" /></svg></button><button aria-label="Decrease scale"><svg width="6" height="4"><path d="M0 0h6L3 4z" /></svg></button></div></Spinner>
              <CheckField><input type="checkbox" defaultChecked />Place text</CheckField>
            </Settings>
          </SettingsBox>
          <ButtonRow $cols="181fr 156fr 156fr 155fr">
            <PaletteButton $tone="#079acb">Pick Areas (Add)</PaletteButton>
            <PaletteButton>Insert Table</PaletteButton>
            <PaletteButton>Export Excel</PaletteButton>
            <PaletteButton $tone="#c94848">Clear</PaletteButton>
          </ButtonRow>
          <TableBox>
            <Table>
              <colgroup>
                {[22, 94, 57, 42, 66].map((w) => <col key={w} width={w} />)}<col />
              </colgroup>
              <thead>
                <tr><th>#</th><th>Name</th><th>Area (m²)</th><th>H (m)</th><th>Volume (m³)</th><th /></tr>
              </thead>
              <tbody>
                {Array.from({ length: 17 }, (_, r) => (
                  <tr key={r}>{Array.from({ length: 6 }, (_, c) => <td key={c}>{volumes[r]?.[c] ?? "\u00a0"}</td>)}</tr>
                ))}
              </tbody>
            </Table>
          </TableBox>
          <ButtonRow $cols="306fr 346fr">
            <PaletteButton>Copy Selected</PaletteButton>
            <PaletteButton>Copy All CSV</PaletteButton>
          </ButtonRow>
          <TotalRow>
            <TotalField>Total (m³)<input readOnly value="1911.441" /></TotalField>
            <CopyButton>Copy</CopyButton>
          </TotalRow>
        </PaletteBody>
        <PaletteRail>
          <Slot $w={14} aria-label="Close palette"><Glyph name="docClose" size={8} /></Slot>
          <Slot $w={14} aria-label="Auto-hide"><Glyph name="autohide" size={8} /></Slot>
          <Slot $w={14} aria-label="Properties"><Glyph name="sun" size={9} /></Slot>
          <RailTitle>CAMBO BIM – TOTAL VOLUME</RailTitle>
          <AcadLogo size={10} />
        </PaletteRail>
      </Palette>
    </Frame>
  );
}
